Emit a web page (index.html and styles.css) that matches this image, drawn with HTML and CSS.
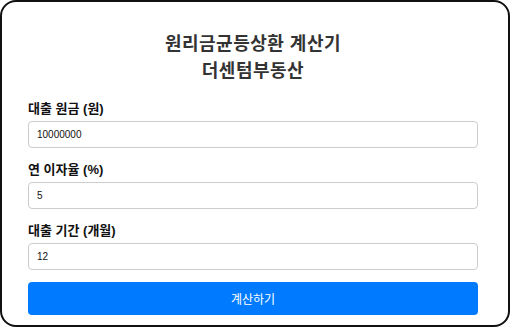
FILE: index.html
```html
<!DOCTYPE html>
<html lang="ko">
<head>
    <meta charset="UTF-8">
    <meta name="viewport" content="width=device-width, initial-scale=1.0">
    <title>원리금균등상환 계산기</title>
    <link rel="stylesheet" href="styles.css">
</head>
<body>

    <div class="calculator">
        <h1>원리금균등상환 계산기<br>더센텀부동산</h1>

        <div class="field">
            <label for="principal">대출 원금 (원)</label>
            <input type="number" id="principal" value="10000000">
        </div>

        <div class="field">
            <label for="rate">연 이자율 (%)</label>
            <input type="number" id="rate" value="5">
        </div>

        <div class="field">
            <label for="months">대출 기간 (개월)</label>
            <input type="number" id="months" value="12">
        </div>

        <button>계산하기</button>
    </div>

</body>
</html>
```

FILE: styles.css
```css
body {
    font-family: "Liberation Sans", "Noto Sans CJK KR", sans-serif;
    background-color: #fff;
    margin: 0;
    padding: 0;
}

.calculator {
    height: 327px;
    box-sizing: border-box;
    border: 2px solid #111;
    border-radius: 16px;
    padding: 29px 30px 0 26px;
    background-color: #fff;
}

h1 {
    margin: 0 0 15px 0;
    font-size: 18px;
    line-height: 27px;
    font-weight: bold;
    letter-spacing: 0.5px;
    color: #333;
    text-align: center;
}

.field {
    margin-bottom: 13px;
}

.field:last-of-type {
    margin-bottom: 12px;
}

label {
    display: block;
    font-size: 13px;
    line-height: 17px;
    font-weight: bold;
    color: #111;
    margin-bottom: 4px;
}

input {
    display: block;
    width: 100%;
    height: 27px;
    box-sizing: border-box;
    padding: 0 8px;
    border: 1px solid #ccc;
    border-radius: 4px;
    font-family: "Liberation Sans", "Noto Sans CJK KR", sans-serif;
    font-size: 10px;
    color: #111;
}

button {
    display: block;
    width: 100%;
    height: 33px;
    border: none;
    border-radius: 4px;
    background-color: #007bff;
    color: #fff;
    font-family: "Noto Sans CJK KR", sans-serif;
    font-size: 12px;
    cursor: pointer;
}
```
